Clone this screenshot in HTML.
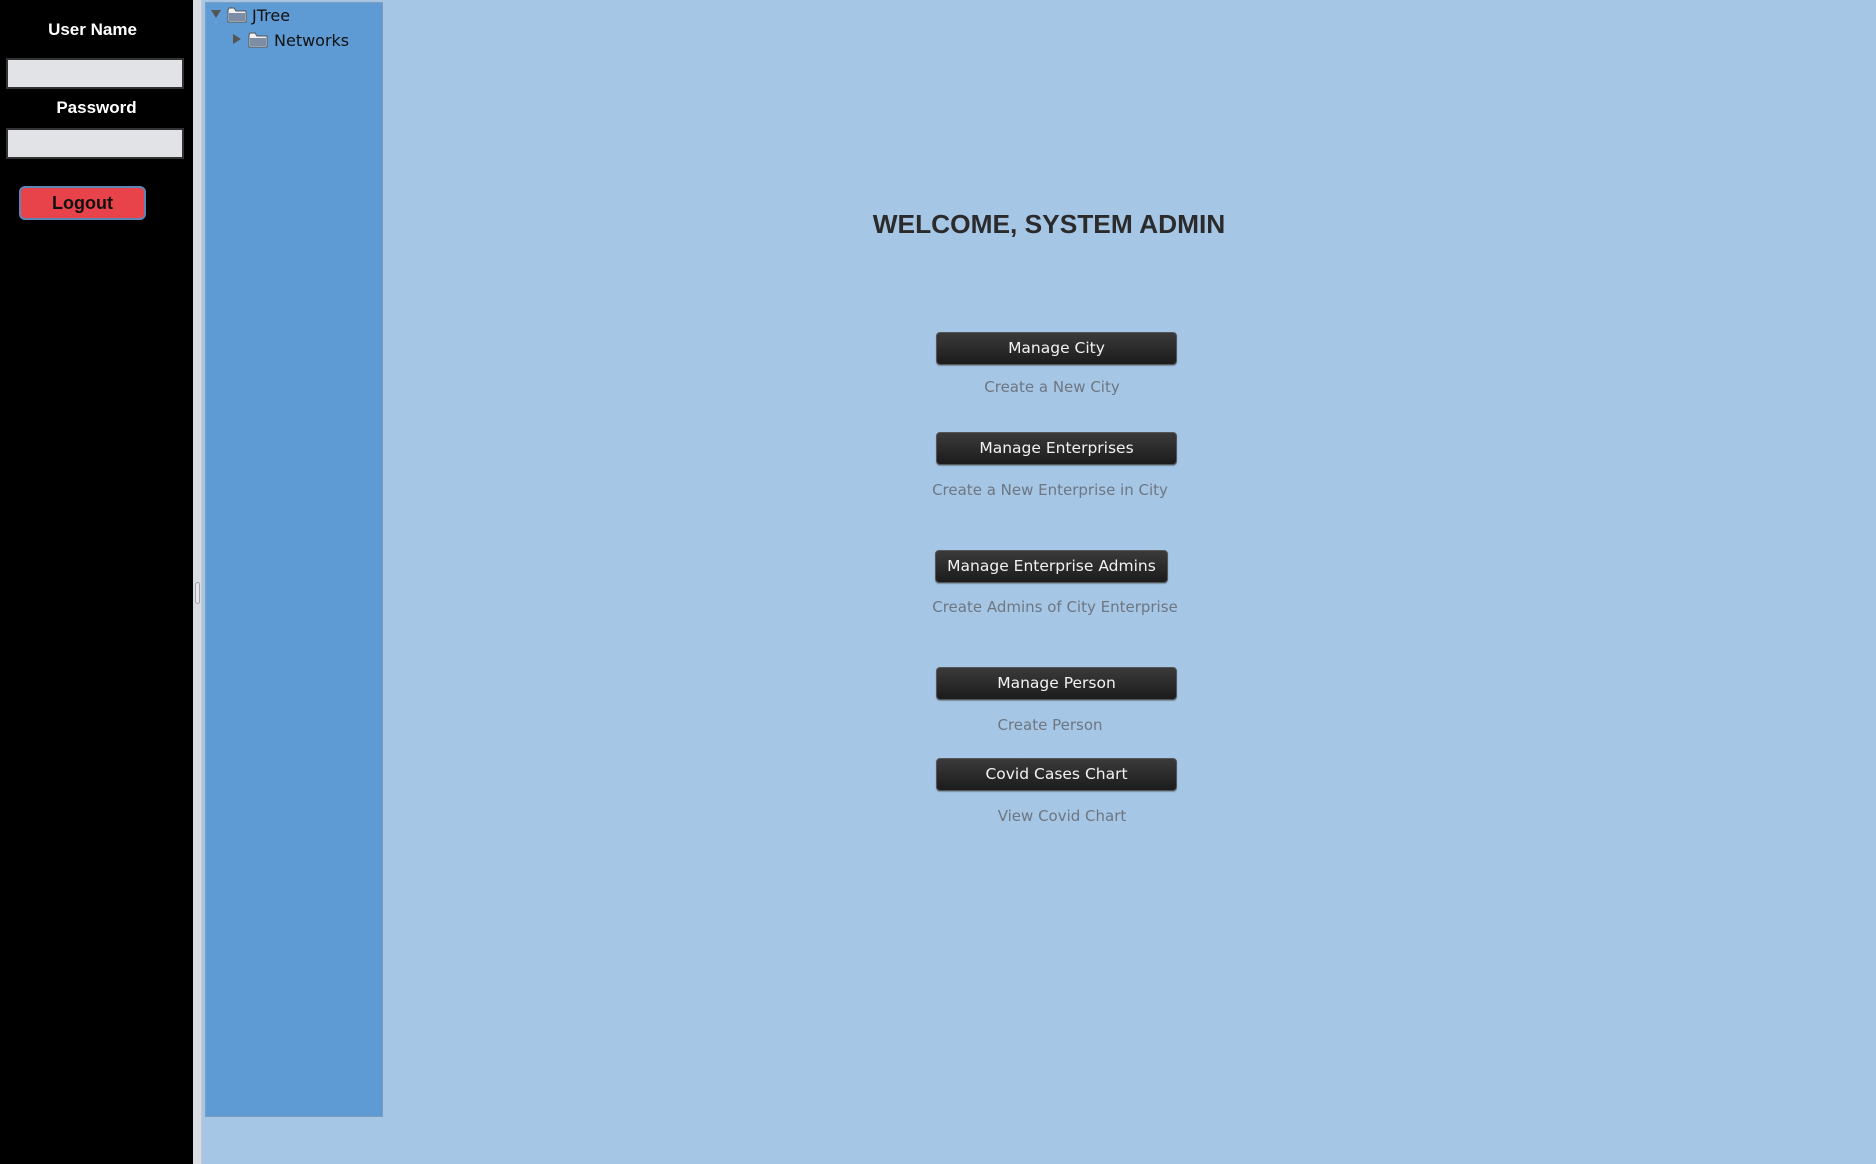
<!DOCTYPE html>
<html><head><style>
*{margin:0;padding:0;box-sizing:border-box}
body{width:1876px;height:1164px;background:#a6c6e6;position:relative;overflow:hidden;font-family:"DejaVu Sans","Liberation Sans",sans-serif}
.abs{position:absolute}
#side{left:0;top:0;width:193px;height:1164px;background:#000}
#div{left:193px;top:0;width:9px;height:1164px;background:#d9dde2;border-right:1px solid #c4cad2}
#grip{left:195px;top:582px;width:5px;height:22px;border:1px solid #a0a4aa;border-radius:3px;background:#e6e8eb}
.lbl{color:#fff;font:bold 17px "Liberation Sans",sans-serif;width:185px;text-align:center}
.fld{left:6px;width:178px;height:31px;background:#e1e3e7;border:2px solid #333}
#logout{left:19px;top:186px;width:127px;height:34px;background:#e8434a;border:2px solid #5b86b5;border-radius:6px;font:bold 18px "Liberation Sans",sans-serif;color:#111;text-align:center;line-height:30px}
#tree{left:205px;top:2px;width:178px;height:1115px;background:#5e9bd4;border:1px solid #7f9bbd}
.tt{font-size:16px;color:#111}
.fold{width:20px;height:16px}
h1{position:absolute;left:0;width:2098px;top:209px;text-align:center;font:bold 26.3px "Liberation Sans",sans-serif;color:#2b2b2b}
.btn{position:absolute;left:936px;width:241px;height:33px;background:linear-gradient(#3a3a3a,#1c1c1c);border:1px solid #555;border-radius:4px;color:#f2f2f2;font-size:15.5px;text-align:center;line-height:31px;box-shadow:0 1px 1px rgba(0,0,0,.3)}
.sub{position:absolute;width:400px;text-align:center;color:#6e7680;font-size:15px}
</style></head><body>
<div id="side" class="abs"></div>
<div id="div" class="abs"></div>
<div id="grip" class="abs"></div>
<div class="abs lbl" style="left:0;top:20px">User Name</div>
<div class="abs fld" style="top:58px"></div>
<div class="abs lbl" style="left:4px;top:98px">Password</div>
<div class="abs fld" style="top:128px"></div>
<div id="logout" class="abs">Logout</div>
<div id="tree" class="abs"></div>
<svg class="abs" style="left:210px;top:8px" width="14" height="12"><path d="M1 2 L11 2 L6 10 Z" fill="#555"/></svg>
<svg class="abs fold" style="left:227px;top:7px" viewBox="0 0 20 16"><path d="M1 3 L1 15 L19 15 L19 4 L9 4 L7 1 L2 1 Z" fill="#eef0f3" stroke="#555" stroke-width="1"/><rect x="2" y="6" width="16" height="8" fill="#7c8ea6"/></svg>
<div class="abs tt" style="left:252px;top:6px">JTree</div>
<svg class="abs" style="left:231px;top:33px" width="12" height="14"><path d="M2 1 L10 6 L2 11 Z" fill="#555"/></svg>
<svg class="abs fold" style="left:248px;top:32px" viewBox="0 0 20 16"><path d="M1 3 L1 15 L19 15 L19 4 L9 4 L7 1 L2 1 Z" fill="#eef0f3" stroke="#555" stroke-width="1"/><rect x="2" y="6" width="16" height="8" fill="#7c8ea6"/></svg>
<div class="abs tt" style="left:274px;top:31px">Networks</div>
<h1>WELCOME, SYSTEM ADMIN</h1>
<div class="btn" style="top:332px">Manage City</div>
<div class="sub" style="left:852px;top:378px">Create a New City</div>
<div class="btn" style="top:432px">Manage Enterprises</div>
<div class="sub" style="left:850px;top:481px">Create a New Enterprise in City</div>
<div class="btn" style="top:550px;width:233px;left:935px">Manage Enterprise Admins</div>
<div class="sub" style="left:855px;top:598px">Create Admins of City Enterprise</div>
<div class="btn" style="top:667px">Manage Person</div>
<div class="sub" style="left:850px;top:716px">Create Person</div>
<div class="btn" style="top:758px">Covid Cases Chart</div>
<div class="sub" style="left:862px;top:807px">View Covid Chart</div>
</body></html>
